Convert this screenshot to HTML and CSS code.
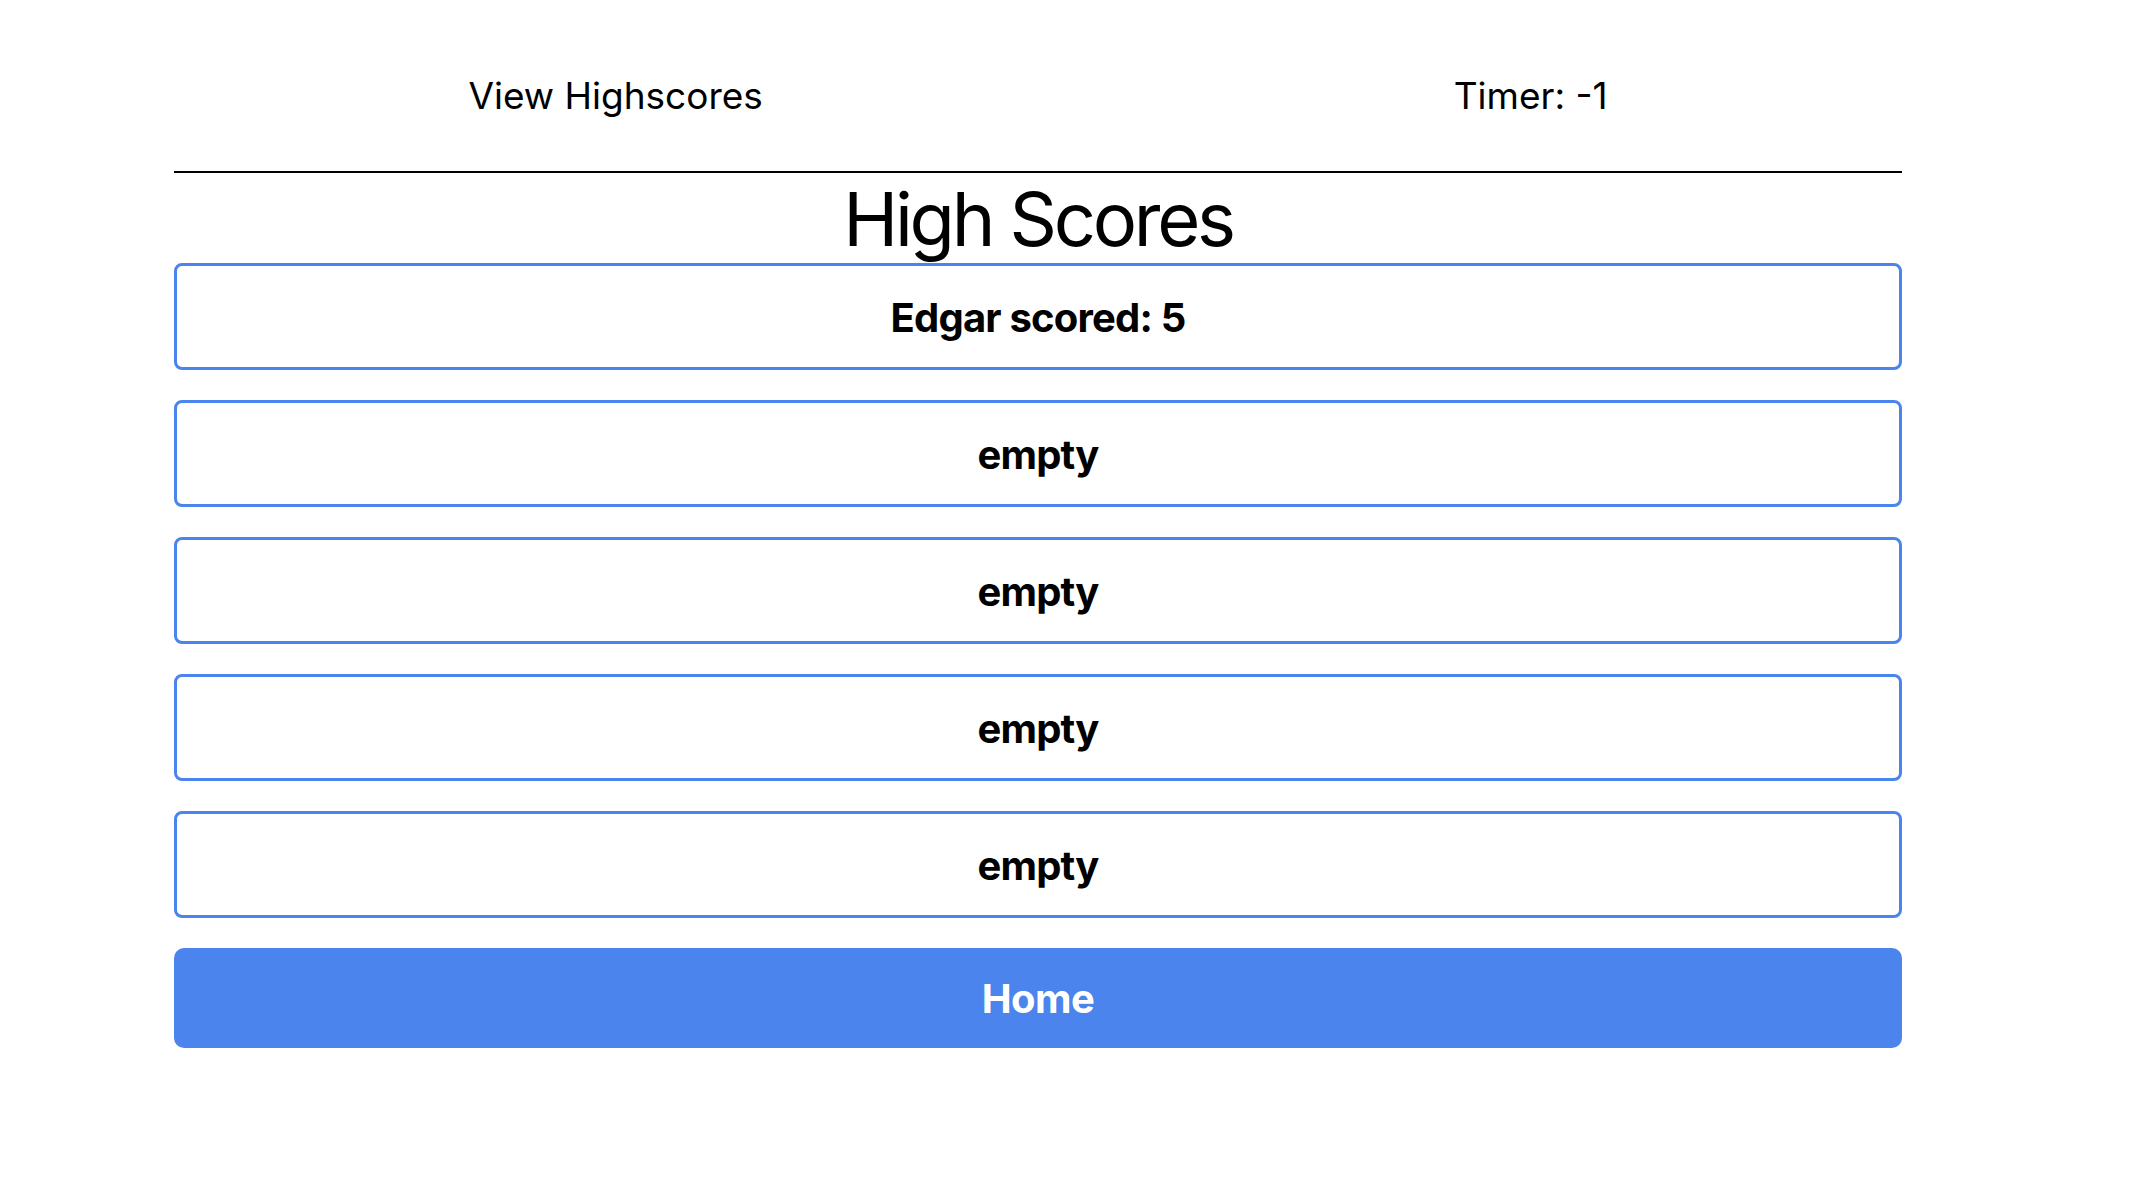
FILE: index.html
```html
<!DOCTYPE html>
<html lang="en">
<head>
<meta charset="utf-8">
<title>High Scores</title>
<link rel="stylesheet" href="styles.css">
</head>
<body>
<div class="page">
  <header class="topbar">
    <a class="nav-link" href="#">View Highscores</a>
    <span class="timer">Timer: -1</span>
  </header>
  <main class="content">
    <h1 class="title">High Scores</h1>
    <ol class="scores">
      <li class="score">Edgar scored: 5</li>
      <li class="score">empty</li>
      <li class="score">empty</li>
      <li class="score">empty</li>
      <li class="score">empty</li>
    </ol>
    <button class="home" type="button">Home</button>
  </main>
</div>
</body>
</html>
```
FILE: styles.css
```css
html, body {
  margin: 0;
  padding: 0;
  background: #ffffff;
}

body {
  font-family: Inter, "Noto Sans", "Liberation Sans", sans-serif;
  color: #000000;
}

.page {
  width: 2076px;
}

.topbar {
  display: flex;
  justify-content: space-around;
  margin: 0 123px;
  padding: 73px 0 52px;
  font-size: 37px;
  line-height: 46px;
}

.nav-link,
.timer {
  color: #000000;
  text-decoration: none;
}

.content {
  margin: 0 174px;
  border-top: 2px solid #000000;
}

.title {
  margin: 0;
  padding-top: 2px;
  text-align: center;
  font-size: 74px;
  font-weight: 400;
  line-height: 88px;
  letter-spacing: -3.3px;
}

.scores {
  list-style: none;
  margin: 0;
  padding: 0;
  display: flex;
  flex-direction: column;
  gap: 30px;
}

.score {
  box-sizing: border-box;
  height: 107px;
  padding-top: 2px;
  border: 3px solid #4a84ec;
  border-radius: 8px;
  display: flex;
  align-items: center;
  justify-content: center;
  font-size: 40px;
  font-weight: 700;
  letter-spacing: -0.8px;
}

.home {
  display: block;
  width: 100%;
  height: 100px;
  margin-top: 30px;
  border: none;
  border-radius: 10px;
  background: #4a84ec;
  color: #ffffff;
  font-family: inherit;
  font-size: 40px;
  font-weight: 700;
  letter-spacing: -0.5px;
  cursor: pointer;
}
```
